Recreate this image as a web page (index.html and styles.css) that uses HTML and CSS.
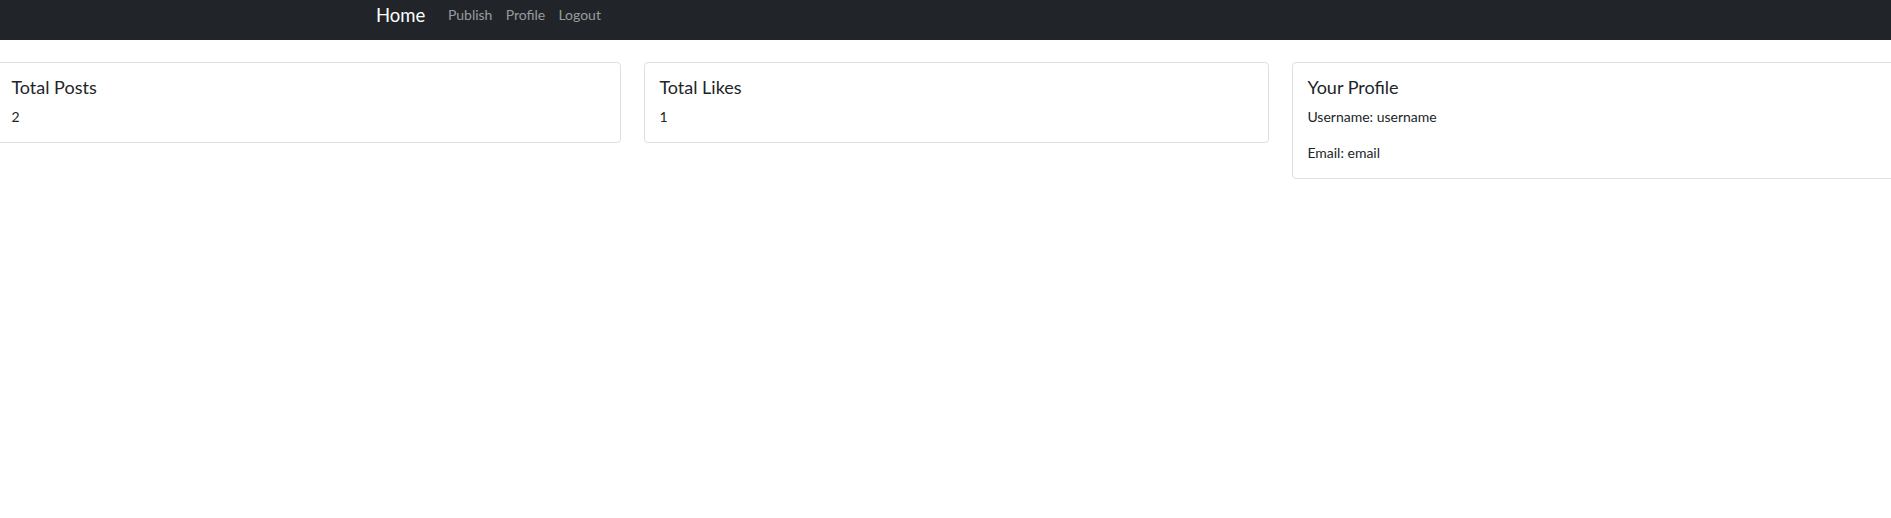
FILE: index.html
```html
<!DOCTYPE html>
<html lang="en">
<head>
<meta charset="utf-8">
<title>Home</title>
<link rel="stylesheet" href="styles.css">
</head>
<body>
<nav class="navbar">
  <a class="brand" href="#">Home</a>
  <ul class="nav-links">
    <li><a href="#">Publish</a></li>
    <li><a href="#">Profile</a></li>
    <li><a href="#">Logout</a></li>
  </ul>
</nav>
<main class="cards">
  <section class="card">
    <h5 class="card-title">Total Posts</h5>
    <p class="card-text">2</p>
  </section>
  <section class="card">
    <h5 class="card-title">Total Likes</h5>
    <p class="card-text">1</p>
  </section>
  <section class="card">
    <h5 class="card-title">Your Profile</h5>
    <p class="card-text">Username: username</p>
    <p class="card-text">Email: email</p>
  </section>
</main>
</body>
</html>
```

FILE: styles.css
```css
html, body {
  margin: 0;
  padding: 0;
  overflow: hidden;
  background: #ffffff;
}
body {
  font-family: "Segoe UI", Lato, "Liberation Sans", sans-serif;
  font-size: 14.4px;
  line-height: 1.5;
  color: #212529;
}
.navbar {
  height: 40px;
  background: #212529;
  display: flex;
  align-items: flex-start;
  padding-left: 376px;
  box-sizing: border-box;
}
.brand {
  color: #ffffff;
  font-size: 18.5px;
  text-decoration: none;
  line-height: 27px;
  padding-top: 2px;
  margin-right: 16px;
}
.nav-links {
  list-style: none;
  display: flex;
  margin: 0;
  padding: 0;
}
.nav-links a {
  display: block;
  color: rgba(255, 255, 255, 0.55);
  text-decoration: none;
  font-size: 14px;
  padding: 4px 6.6px 0;
  line-height: 22px;
}
.cards {
  display: grid;
  grid-template-columns: repeat(3, 625px);
  column-gap: 23px;
  align-items: start;
  margin: 22px 0 0 -4px;
}
.card {
  border: 1px solid #dfdfdf;
  border-radius: 4px;
  padding: 14.4px;
}
.card-title {
  margin: 0 0 7.2px;
  font-size: 18px;
  font-weight: 400;
  line-height: 21.6px;
}
.card-text {
  margin: 0 0 14.4px;
  font-size: 14px;
  line-height: 21.6px;
}
.card-text:last-child {
  margin-bottom: 0;
}
```
